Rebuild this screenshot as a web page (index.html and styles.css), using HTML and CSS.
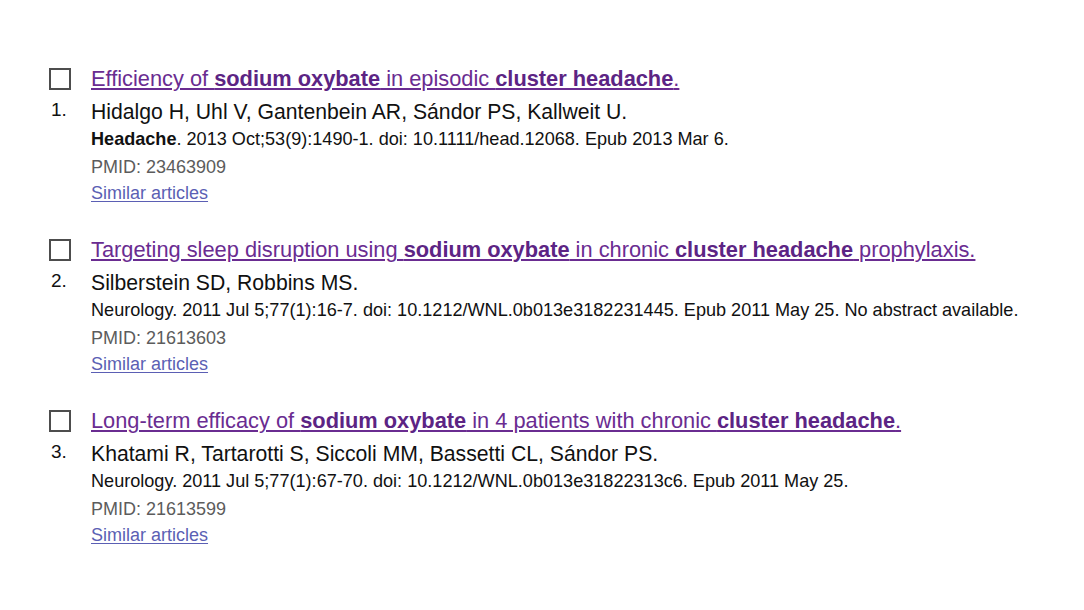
FILE: index.html
```html
<!DOCTYPE html>
<html>
<head>
<meta charset="utf-8">
<link rel="stylesheet" href="styles.css">
</head>
<body>
<div class="results">
  <article class="item">
    <div class="side">
      <span class="box"></span>
      <span class="num">1.</span>
    </div>
    <div class="content">
      <a class="title" href="#">Efficiency of <b>sodium oxybate</b> in episodic <b>cluster headache</b>.</a>
      <div class="authors">Hidalgo H, Uhl V, Gantenbein AR, Sándor PS, Kallweit U.</div>
      <div class="cite"><b>Headache</b>. 2013 Oct;53(9):1490-1. doi: 10.1111/head.12068. Epub 2013 Mar 6.</div>
      <div class="pmid">PMID: 23463909</div>
      <a class="similar" href="#">Similar articles</a>
    </div>
  </article>
  <article class="item">
    <div class="side">
      <span class="box"></span>
      <span class="num">2.</span>
    </div>
    <div class="content">
      <a class="title" href="#">Targeting sleep disruption using <b>sodium oxybate</b> in chronic <b>cluster headache</b> prophylaxis.</a>
      <div class="authors">Silberstein SD, Robbins MS.</div>
      <div class="cite">Neurology. 2011 Jul 5;77(1):16-7. doi: 10.1212/WNL.0b013e3182231445. Epub 2011 May 25. No abstract available.</div>
      <div class="pmid">PMID: 21613603</div>
      <a class="similar" href="#">Similar articles</a>
    </div>
  </article>
  <article class="item">
    <div class="side">
      <span class="box"></span>
      <span class="num">3.</span>
    </div>
    <div class="content">
      <a class="title" href="#">Long-term efficacy of <b>sodium oxybate</b> in 4 patients with chronic <b>cluster headache</b>.</a>
      <div class="authors">Khatami R, Tartarotti S, Siccoli MM, Bassetti CL, Sándor PS.</div>
      <div class="cite">Neurology. 2011 Jul 5;77(1):67-70. doi: 10.1212/WNL.0b013e31822313c6. Epub 2011 May 25.</div>
      <div class="pmid">PMID: 21613599</div>
      <a class="similar" href="#">Similar articles</a>
    </div>
  </article>
</div>
</body>
</html>
```
FILE: styles.css
```css
html, body {
  margin: 0;
  padding: 0;
  background: #ffffff;
}
body {
  font-family: "Liberation Sans", Arial, sans-serif;
  color: #111111;
}
.results {
  padding: 65px 0 0 49px;
  display: flex;
  flex-direction: column;
  gap: 30px;
}
.item {
  display: grid;
  grid-template-columns: 42px 1fr;
}
.side {
  display: flex;
  flex-direction: column;
  align-items: flex-start;
}
.box {
  width: 18px;
  height: 18px;
  border: 2px solid #4d4d4d;
  margin-top: 3px;
}
.num {
  font-size: 19px;
  line-height: 20px;
  margin-top: 10px;
  margin-left: 2px;
}
.content {
  display: flex;
  flex-direction: column;
  align-items: flex-start;
}
.title {
  font-size: 21.8px;
  line-height: 28px;
  color: #6a2c91;
  text-decoration: underline;
  text-decoration-thickness: 1.5px;
  text-underline-offset: 2px;
}
.title b {
  font-weight: bold;
  color: #5c2484;
}
.authors {
  font-size: 21.2px;
  line-height: 28px;
  margin-top: 5px;
}
.cite {
  font-size: 18.1px;
  line-height: 26px;
}
.pmid {
  font-size: 18px;
  line-height: 26px;
  margin-top: 2px;
  color: #5c5c5c;
}
.similar {
  font-size: 18px;
  line-height: 26px;
  color: #5b5fb4;
  text-decoration: underline;
  text-underline-offset: 2px;
}
```
